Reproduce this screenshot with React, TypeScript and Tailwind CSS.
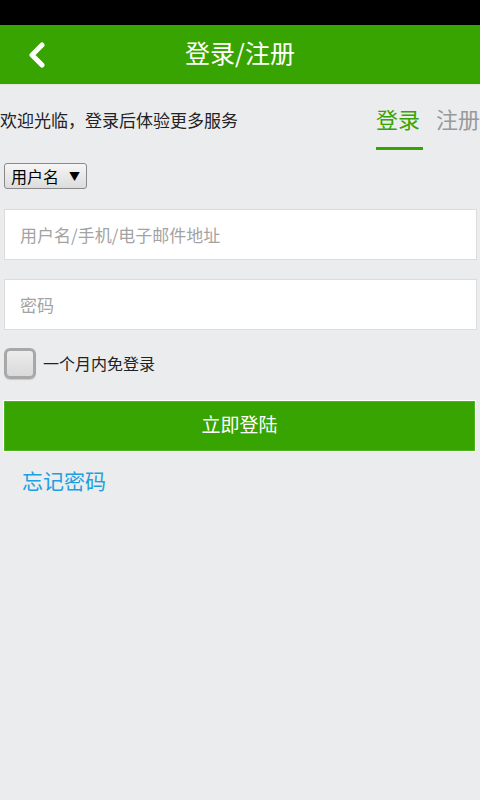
import { useState } from "react";

const font = { fontFamily: '"Noto Sans CJK SC", "Noto Sans", sans-serif' };

export default function App() {
  const [remember, setRemember] = useState(false);

  return (
    <div className="w-[480px] h-[800px] bg-[#ebecee] flex flex-col" style={font}>
      {/* status bar */}
      <div className="h-[25px] bg-black" />

      {/* header */}
      <header className="h-[60px] bg-[#38a401] border-b border-[#dfe6d8] flex items-center relative">
        <button className="absolute left-[24px] top-[16px] w-[26px] h-[28px] flex items-center justify-center">
          <svg width="20" height="26" viewBox="0 0 20 26">
            <path
              d="M15 3 L5 13 L15 23"
              fill="none"
              stroke="white"
              strokeWidth="5"
              strokeLinecap="round"
              strokeLinejoin="round"
            />
          </svg>
        </button>
        <h1 className="flex-1 text-center text-white text-[25px] leading-none -mt-[4px]">登录/注册</h1>
      </header>

      {/* welcome + tabs */}
      <div className="flex items-start justify-between mt-[22px]">
        <p className="text-[17px] leading-none text-[#222] mt-[4px]">欢迎光临，登录后体验更多服务</p>
        <div className="flex gap-[13px] text-[22px] leading-none">
          <div className="flex flex-col">
            <span className="text-[#38a401] pb-[18px]">登录</span>
            <span className="h-[3px] bg-[#38a401] w-[47px]" />
          </div>
          <span className="text-[#999]">注册</span>
        </div>
      </div>

      {/* select */}
      <div className="px-[4px] mt-[13px]">
        <div className="w-[83px] h-[26px] border border-[#8a8a8a] rounded-[3px] bg-gradient-to-b from-[#f6f6f6] to-[#dcdcdc] flex items-center pl-[6px] gap-[10px] text-[16px] text-black">
          <span className="leading-none">用户名</span>
          <span className="text-[11px] leading-none">▼</span>
        </div>
      </div>

      {/* inputs */}
      <div className="px-[4px] mt-[20px] flex flex-col gap-[19px] pr-[3px]">
        <input
          className="h-[51px] bg-white border border-[#dcdcdc] px-[15px] text-[17px] placeholder:text-[#a3a3a3] outline-none"
          placeholder="用户名/手机/电子邮件地址"
        />
        <input
          type="password"
          className="h-[51px] bg-white border border-[#dcdcdc] px-[15px] text-[17px] placeholder:text-[#a3a3a3] outline-none"
          placeholder="密码"
        />
      </div>

      {/* remember */}
      <label className="flex items-center gap-[7px] px-[4px] mt-[18px] cursor-pointer">
        <span
          onClick={() => setRemember(!remember)}
          className="w-[32px] h-[31px] rounded-[6px] border-[3px] border-[#a8a8a8] bg-gradient-to-b from-[#ececec] to-[#dadada] shadow-[0_1px_1px_rgba(0,0,0,0.15)] flex items-center justify-center text-[#38a401] text-[18px]"
        >
          {remember ? "✓" : ""}
        </span>
        <span className="text-[16px] text-[#222] leading-none -mt-[2px]">一个月内免登录</span>
      </label>

      {/* submit */}
      <div className="px-[3px] mt-[21px] pr-[4px]">
        <button className="w-full h-[52px] pb-[4px] bg-[#38a401] border border-white outline outline-1 outline-[#4cb520] -outline-offset-2 text-white text-[19px]">
          立即登陆
        </button>
      </div>

      {/* forgot */}
      <a className="ml-[22px] mt-[18px] text-[21px] leading-none text-[#1d9fe0]">忘记密码</a>
    </div>
  );
}
